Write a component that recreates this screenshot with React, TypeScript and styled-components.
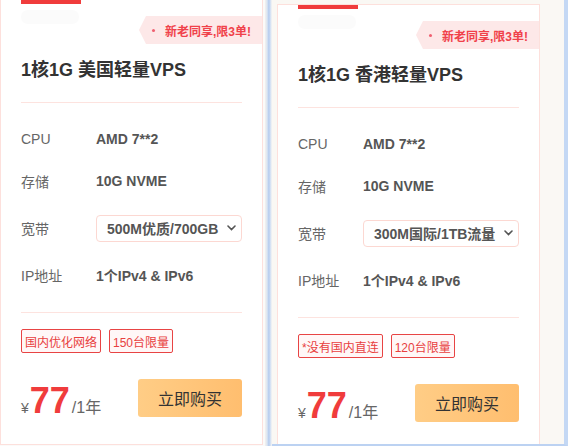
import React from "react";
import styled, { createGlobalStyle } from "styled-components";

type Plan = {
  name: string;
  cpu: string;
  disk: string;
  bandwidth: string;
  ip: string;
  tags: string[];
  price: string;
  period: string;
  labelWidth: number; // width of the spec label column
};

const plans: Plan[] = [
  {
    name: "1核1G 美国轻量VPS",
    cpu: "AMD 7**2",
    disk: "10G NVME",
    bandwidth: "500M优质/700GB",
    ip: "1个IPv4 & IPv6",
    tags: ["国内优化网络", "150台限量"],
    price: "77",
    period: "/1年",
    labelWidth: 75,
  },
  {
    name: "1核1G 香港轻量VPS",
    cpu: "AMD 7**2",
    disk: "10G NVME",
    bandwidth: "300M国际/1TB流量",
    ip: "1个IPv4 & IPv6",
    tags: ["*没有国内直连", "120台限量"],
    price: "77",
    period: "/1年",
    labelWidth: 65,
  },
];

const GlobalStyle = createGlobalStyle`
  body {
    margin: 0;
    background: #ffffff;
    font-family: "Liberation Sans", "Noto Sans CJK SC", sans-serif;
  }
`;

const Page = styled.div`
  display: flex;
  width: 568px;
  height: 446px;
  overflow: hidden;
`;

const Pane = styled.div<{ $offset: number; $framed?: boolean }>`
  flex: ${({ $framed }) => ($framed ? 1 : "0 0 265px")};
  height: 446px;
  box-sizing: border-box;
  overflow: hidden;
  padding: ${({ $offset, $framed }) => ($framed ? `${$offset}px 0 0 5px` : `0`)};
  background: ${({ $framed }) => ($framed ? "#faf8f4" : "#fbfaf9")};
  border-right: ${({ $framed }) => ($framed ? "4px solid #c4d8f4" : "none")};
  border-bottom: ${({ $framed }) => ($framed ? "2px solid #bcd2f2" : "none")};
`;

const Edge = styled.div`
  flex: 0 0 7px;
  height: 446px;
  background: linear-gradient(
    90deg,
    #f4f2ee 0%,
    #dbe5f2 30%,
    #b3caee 55%,
    #d9e4f4 80%,
    #f8f6f2 100%
  );
`;

const Card = styled.div<{ $shift: number }>`
  position: relative;
  width: 263px;
  height: 446px;
  margin-top: ${({ $shift }) => $shift}px;
  box-sizing: border-box;
  border: 1px solid #fde0dc;
  background: #ffffff;
  padding: 0 20px;
  display: flex;
  flex-direction: column;
`;

const TopMark = styled.div`
  width: 60px;
  height: 4px;
  background: #f03c3c;
`;

// faint placeholder under the top mark
const Ghost = styled.div`
  width: 58px;
  height: 14px;
  margin-top: 6px;
  border-radius: 7px;
  background: #fbfbfb;
`;

const Promo = styled.div`
  position: absolute;
  top: 16px;
  right: 0;
  width: 123px;
  height: 28px;
  box-sizing: border-box;
  padding-left: 13px;
  display: flex;
  align-items: center;
  gap: 10px;
  background: #fde8e8;
  clip-path: polygon(7px 0, 100% 0, 100% 100%, 7px 100%, 0 50%);
  color: #f0414a;
  font-size: 12px;
  font-weight: bold;
`;

const PromoDot = styled.span`
  width: 3px;
  height: 3px;
  border-radius: 50%;
  background: #f06070;
`;

const Title = styled.h3`
  margin: 34px 0 0;
  font-size: 18px;
  line-height: 24px;
  font-weight: bold;
  color: #333333;
  white-space: nowrap;
`;

const Rule = styled.div<{ $gap: number }>`
  height: 1px;
  margin-top: ${({ $gap }) => $gap}px;
  background: #fde3df;
`;

const Specs = styled.div`
  margin-top: 25px;
  display: flex;
  flex-direction: column;
  gap: 20px;
`;

const SpecRow = styled.div<{ $tall?: boolean }>`
  display: flex;
  align-items: center;
  height: ${({ $tall }) => ($tall ? 32 : 22)}px;
`;

const Label = styled.span<{ $width: number }>`
  flex: 0 0 ${({ $width }) => $width}px;
  font-size: 14px;
  color: #666666;
`;

const Value = styled.span`
  font-size: 14px;
  font-weight: bold;
  color: #555555;
  white-space: nowrap;
`;

const Picker = styled.div`
  flex: 1;
  height: 27px;
  box-sizing: border-box;
  border: 1px solid #fcd8d2;
  border-radius: 4px;
  padding: 0 5px 0 10px;
  display: flex;
  align-items: center;
  justify-content: space-between;
  font-size: 14px;
  font-weight: bold;
  color: #555555;
  white-space: nowrap;
`;

const Tags = styled.div`
  margin-top: 16px;
  display: flex;
  gap: 8px;
`;

const Tag = styled.span`
  height: 24px;
  box-sizing: border-box;
  padding: 0 3px;
  display: flex;
  align-items: center;
  border: 1px solid #e84444;
  border-radius: 2px;
  background: #fff7f7;
  color: #e84040;
  font-size: 12px;
  white-space: nowrap;
`;

const Footer = styled.div`
  margin-top: 26px;
  display: flex;
  align-items: flex-end;
  justify-content: space-between;
`;

const Price = styled.div`
  display: flex;
  align-items: baseline;
  margin-bottom: -2px;
`;

const Currency = styled.span`
  font-size: 14px;
  color: #666666;
`;

const Amount = styled.span`
  font-size: 36px;
  line-height: 36px;
  font-weight: bold;
  color: #f03c3c;
  margin: 0 2px 0 1px;
`;

const Period = styled.span`
  font-size: 16px;
  color: #666666;
`;

const BuyButton = styled.button`
  width: 104px;
  height: 38px;
  border: none;
  border-radius: 3px;
  background: linear-gradient(90deg, #ffcd86 0%, #ffbe6f 100%);
  font-family: inherit;
  font-size: 16px;
  color: #333333;
  cursor: pointer;
`;

const Chevron = () => (
  <svg width="9" height="6" viewBox="0 0 9 6" fill="none">
    <path d="M1 1l3.5 3.5L8 1" stroke="#555" strokeWidth="1.6" strokeLinecap="round" />
  </svg>
);

const PlanCard: React.FC<{ plan: Plan; shift: number }> = ({ plan, shift }) => (
  <Card $shift={shift}>
    <TopMark />
    <Ghost />
    <Promo>
      <PromoDot />
      新老同享,限3单!
    </Promo>
    <Title>{plan.name}</Title>
    <Rule $gap={20} />
    <Specs>
      <SpecRow>
        <Label $width={plan.labelWidth}>CPU</Label>
        <Value>{plan.cpu}</Value>
      </SpecRow>
      <SpecRow>
        <Label $width={plan.labelWidth}>存储</Label>
        <Value>{plan.disk}</Value>
      </SpecRow>
      <SpecRow $tall>
        <Label $width={plan.labelWidth}>宽带</Label>
        <Picker>
          {plan.bandwidth}
          <Chevron />
        </Picker>
      </SpecRow>
      <SpecRow>
        <Label $width={plan.labelWidth}>IP地址</Label>
        <Value>{plan.ip}</Value>
      </SpecRow>
    </Specs>
    <Rule $gap={26} />
    <Tags>
      {plan.tags.map((t) => (
        <Tag key={t}>{t}</Tag>
      ))}
    </Tags>
    <Footer>
      <Price>
        <Currency>¥</Currency>
        <Amount>{plan.price}</Amount>
        <Period>{plan.period}</Period>
      </Price>
      <BuyButton>立即购买</BuyButton>
    </Footer>
  </Card>
);

export default function App() {
  return (
    <>
      <GlobalStyle />
      <Page>
        <Pane $offset={0}>
          <PlanCard plan={plans[0]} shift={-1} />
        </Pane>
        <Edge />
        <Pane $offset={4} $framed>
          <PlanCard plan={plans[1]} shift={0} />
        </Pane>
      </Page>
    </>
  );
}
